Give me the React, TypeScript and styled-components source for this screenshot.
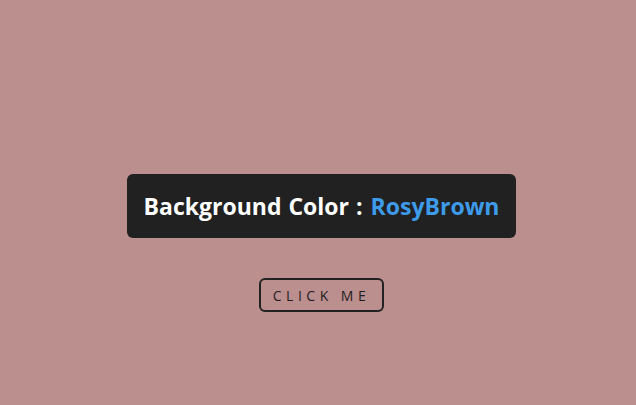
import React from "react";
import styled, { createGlobalStyle } from "styled-components";

const Global = createGlobalStyle`
  html, body { margin: 0; padding: 0; background: #bc8f8f; }
  body { font-family: "Open Sans", "Noto Sans", sans-serif; }
`;

const Page = styled.div`
  min-height: 405px;
  display: flex;
  flex-direction: column;
  align-items: center;
  padding: 174px 0 0 7px;
  box-sizing: border-box;
`;

const Banner = styled.div`
  background: #212121;
  border-radius: 6px;
  width: 389px;
  height: 64px;
  display: flex;
  align-items: center;
  justify-content: center;
  box-sizing: border-box;
  color: #ffffff;
  font-weight: 700;
  font-size: 23px;
  letter-spacing: 0;
  word-spacing: 1px;
`;

const ColorName = styled.span<{ $color: string }>`
  color: ${(p) => p.$color};
  margin-left: 8px;
`;

const Button = styled.button`
  margin-top: 40px;
  width: 125px;
  height: 34px;
  border: 2px solid #222;
  border-radius: 6px;
  background: transparent;
  color: #1e1e1e;
  font-family: "Open Sans", "Noto Sans", sans-serif;
  font-size: 14px;
  font-weight: 500;
  letter-spacing: 4.5px;
  padding: 0;
  box-sizing: border-box;
  cursor: pointer;
`;

export default function App() {
  return (
    <>
      <Global />
      <Page>
        <Banner>
          Background Color :<ColorName $color="#3d9be9">RosyBrown</ColorName>
        </Banner>
        <Button>CLICK ME</Button>
      </Page>
    </>
  );
}
